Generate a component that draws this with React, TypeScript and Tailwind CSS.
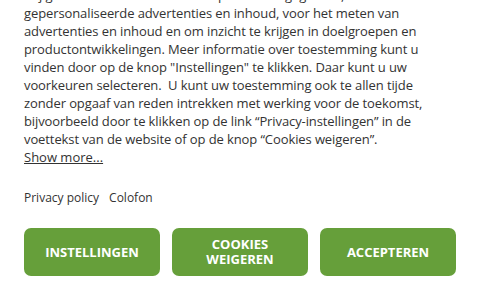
export default function App() {
  return (
    <div
      className="h-[300px] w-[480px] overflow-hidden bg-white px-6 text-[#333333]"
      style={{ fontFamily: "'Open Sans', 'Noto Sans', sans-serif" }}
    >
      <p className="-mt-[14px] text-[13px] leading-[18px] tracking-[-0.1px]">
        Wij gebruiken cookies voor het opslaan van gegevens, voor
        <br />
        gepersonaliseerde advertenties en inhoud, voor het meten van advertenties en
        inhoud en om inzicht te krijgen in doelgroepen en productontwikkelingen. Meer
        informatie over toestemming kunt u vinden door op de knop "Instellingen" te
        klikken. Daar kunt u uw voorkeuren selecteren.&nbsp; U kunt uw toestemming ook te
        allen tijde zonder opgaaf van reden intrekken met werking voor de toekomst,
        bijvoorbeeld door te klikken op de link “Privacy-instellingen” in de voettekst
        van de website of op de knop “Cookies weigeren”.
      </p>
      <a href="#" className="block w-fit text-[13px] leading-[18px] underline">
        Show more...
      </a>
      <div className="mt-[23px] flex gap-[10px] text-[12px] leading-[18px]">
        <a href="#">Privacy policy</a>
        <a href="#">Colofon</a>
      </div>
      <div className="mt-[21px] grid grid-cols-3 gap-3">
        <button className="flex h-[48px] items-center justify-center rounded-[7px] bg-[#669f3a] text-[13px] font-bold leading-[15px] text-white">
          INSTELLINGEN
        </button>
        <button className="flex h-[48px] items-center justify-center rounded-[7px] bg-[#669f3a] text-[13px] font-bold leading-[15px] text-white">
          COOKIES
          <br />
          WEIGEREN
        </button>
        <button className="flex h-[48px] items-center justify-center rounded-[7px] bg-[#669f3a] text-[13px] font-bold leading-[15px] text-white">
          ACCEPTEREN
        </button>
      </div>
    </div>
  );
}
